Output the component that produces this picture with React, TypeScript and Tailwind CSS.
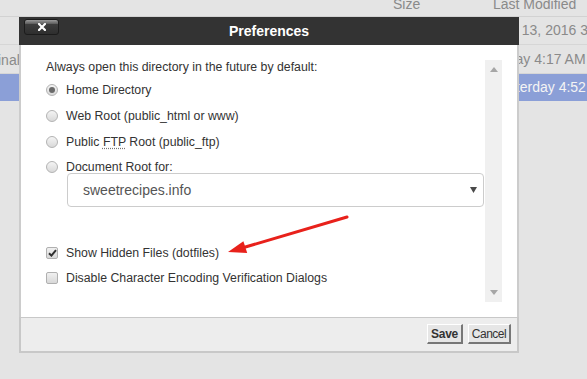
import React from "react";

function Radio({ checked }: { checked?: boolean }) {
  return (
    <span className="relative flex h-[12px] w-[12px] shrink-0 items-center justify-center rounded-full border border-[#b3b3b3] bg-[linear-gradient(to_bottom,#f4f4f4,#d9d9d9)]">
      {checked && <span className="h-[6px] w-[6px] rounded-full bg-[#6a6a6a]" />}
    </span>
  );
}

function Checkbox({ checked }: { checked?: boolean }) {
  return (
    <span className="relative flex h-[12px] w-[12px] shrink-0 items-center justify-center rounded-[2px] border border-[#b0b0b0] bg-[linear-gradient(to_bottom,#f0f0f0,#d8d8d8)]">
      {checked && (
        <svg width="9" height="8" viewBox="0 0 9 8">
          <path d="M1 4.2 L3.4 6.6 L8 1.2" fill="none" stroke="#2f2f2f" strokeWidth="2" />
        </svg>
      )}
    </span>
  );
}

export default function App() {
  return (
    <div className="relative h-[379px] w-[587px] overflow-hidden bg-[#e4e4e4] font-['Liberation_Sans',Arial,sans-serif]">
      {/* background file list */}
      <div className="flex flex-col text-[14px] text-[#8a8a8a]">
        <div className="flex h-[17px] items-start border-b border-[#d2d2d2] leading-[14px]">
          <div className="w-[393px] shrink-0" />
          <div className="w-[100px] shrink-0 -translate-y-[3px]">Size</div>
          <div className="-translate-y-[3px]">Last Modified</div>
        </div>
        <div className="flex h-[28px] items-center border-b border-[#d6d6d6]">
          <div className="w-[493px] shrink-0" />
          <div className="whitespace-nowrap">Dec 13, 2016 3:21 PM</div>
        </div>
        <div className="flex h-[29px] items-center border-b border-[#d6d6d6]">
          <div className="w-[493px] shrink-0 pt-[3px]">
            <span className="ml-[-2px]">inal</span>
          </div>
          <div className="whitespace-nowrap">Today 4:17 AM</div>
        </div>
        <div className="flex h-[27px] items-center bg-[#8b9fd7] text-[#f4f4f4]">
          <div className="w-[493px] shrink-0" />
          <div className="whitespace-nowrap">Yesterday 4:52 AM</div>
        </div>
      </div>

      {/* dialog */}
      <div className="absolute left-[19px] top-[17px] w-[500px] text-[12.3px] text-[#333]">
        <div className="relative flex h-[28px] items-center justify-center bg-[#333]">
          <div className="absolute left-[5px] top-[2px] flex h-[16px] w-[35px] items-center justify-center rounded-[3px] border border-[#1c1c1c] bg-[linear-gradient(to_bottom,#9a9a9a_0%,#5c5c5c_28%,#3c3c3c_32%,#2e2e2e_100%)]">
            <svg width="8" height="8" viewBox="0 0 8 8">
              <path d="M1 1 L7 7 M7 1 L1 7" stroke="#ffffff" strokeWidth="2.2" strokeLinecap="square" />
            </svg>
          </div>
          <span className="text-[14px] font-bold text-white">Preferences</span>
        </div>

        <div className="h-[272px] border-x-2 border-[#cccccc] bg-white pb-[15px] pl-[25px] pr-[15px] pt-[15px]">
          <div className="flex h-[242px]">
            <div className="flex flex-1 flex-col">
              <p className="h-[15px] leading-[15px]">Always open this directory in the future by default:</p>
              <div className="mt-[8px] flex h-[14px] items-center gap-[8px]">
                <Radio checked />
                <span>Home Directory</span>
              </div>
              <div className="mt-[12px] flex h-[14px] items-center gap-[8px]">
                <Radio />
                <span>Web Root (public_html or www)</span>
              </div>
              <div className="mt-[12px] flex h-[14px] items-center gap-[8px]">
                <Radio />
                <span>
                  Public{" "}
                  <abbr className="underline decoration-dotted decoration-[#777] underline-offset-2">FTP</abbr>{" "}
                  Root (public_ftp)
                </span>
              </div>
              <div className="mt-[11px] flex h-[14px] items-center gap-[8px]">
                <Radio />
                <span>Document Root for:</span>
              </div>
              <div className="ml-[21px] mr-[1px] mt-[-1px] flex h-[34px] items-center justify-between rounded-[4px] border border-[#cccccc] pl-[15px] pr-[6px]">
                <span className="text-[14px] text-[#555]">sweetrecipes.info</span>
                <svg width="7" height="6" viewBox="0 0 7 6">
                  <path d="M0 0 H7 L3.5 6 Z" fill="#4a4a4a" />
                </svg>
              </div>
              <div className="mt-[39px] flex h-[14px] items-center gap-[8px]">
                <Checkbox checked />
                <span>Show Hidden Files (dotfiles)</span>
              </div>
              <div className="mt-[11px] flex h-[14px] items-center gap-[8px]">
                <Checkbox />
                <span>Disable Character Encoding Verification Dialogs</span>
              </div>
            </div>
            <div className="flex w-[17px] flex-col items-center justify-between bg-[#f0f0f0] py-[7px]">
              <svg width="8" height="5" viewBox="0 0 8 5">
                <path d="M0 5 H8 L4 0 Z" fill="#a6a6a6" />
              </svg>
              <svg width="8" height="5" viewBox="0 0 8 5">
                <path d="M0 0 H8 L4 5 Z" fill="#a6a6a6" />
              </svg>
            </div>
          </div>
        </div>

        <div className="flex h-[36px] items-start justify-end gap-[5px] border-x-2 border-b-2 border-t border-[#c8c8c8] bg-[#ededed] pr-[6px] pt-[6px]">
          <button className="flex h-[20px] w-[36px] items-center justify-center border-b-2 border-l border-r-2 border-t border-b-[#777] border-l-white border-r-[#777] border-t-white bg-[#e6e6e6] text-[12px] font-bold tracking-[-0.3px] text-[#333]">
            Save
          </button>
          <button className="flex h-[20px] w-[43px] items-center justify-center border-b-2 border-l border-r-2 border-t border-b-[#777] border-l-white border-r-[#777] border-t-white bg-[#e6e6e6] text-[12px] tracking-[-0.5px] text-[#333]">
            Cancel
          </button>
        </div>
      </div>

      {/* red annotation arrow */}
      <svg className="pointer-events-none absolute left-0 top-0" width="587" height="379" viewBox="0 0 587 379">
        <line x1="347" y1="217" x2="242" y2="248" stroke="#e8211b" strokeWidth="3" strokeLinecap="round" />
        <path d="M228 252 L243.4 241.2 L247.2 253 Z" fill="#e8211b" />
      </svg>
    </div>
  );
}
